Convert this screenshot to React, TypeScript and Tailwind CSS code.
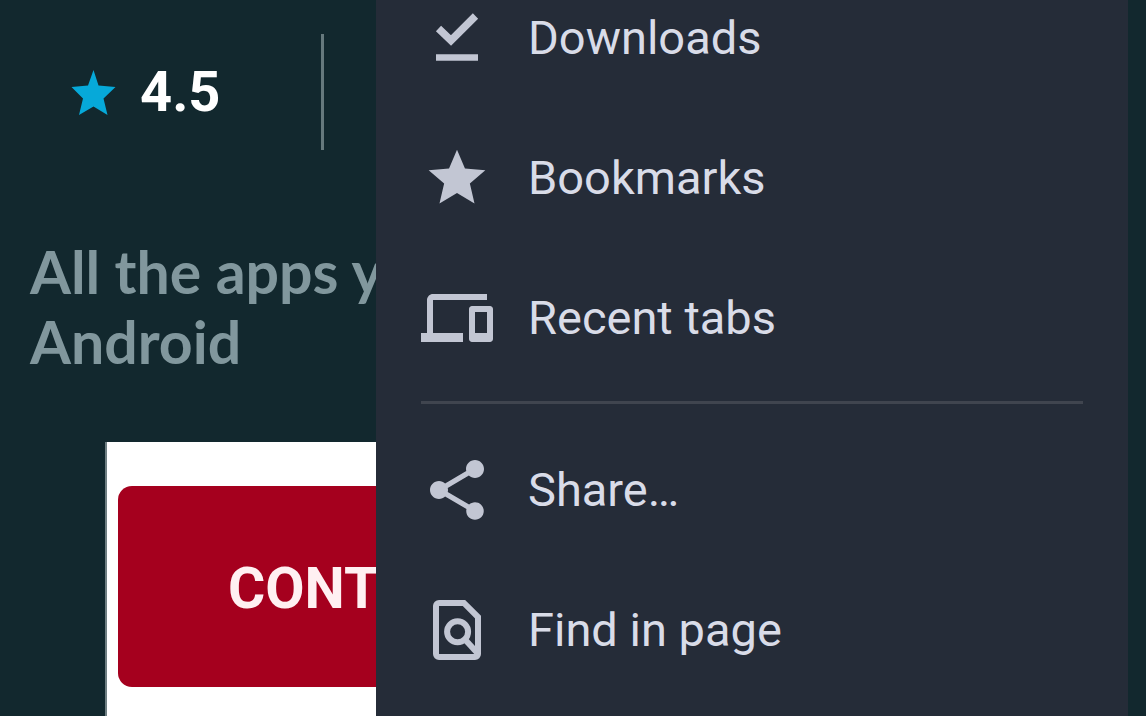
import type { ReactNode } from "react";
import { MdDevices, MdShare, MdStar } from "react-icons/md";

function RatingStar() {
  return (
    <svg viewBox="0 0 54 54" className="size-[54px]" fill="currentColor" aria-hidden="true">
      <path d="M27.500 5 32.500 20.500 49.500 22 37.500 33.500 41.500 50 27.500 41.500 13 50 17 33.500 5.500 22 22 20.500z" />
    </svg>
  );
}

function DownloadDoneIcon() {
  return (
    <svg viewBox="0 0 72 72" className="size-[72px]" fill="none" stroke="currentColor" aria-hidden="true">
      <path d="M17.500 26.500 30 38.500 54.500 14" strokeWidth="7.500" />
      <path d="M15 55.500h42" strokeWidth="6.500" />
    </svg>
  );
}

function FindInPageIcon() {
  return (
    <svg viewBox="0 0 24 24" className="size-[72px]" fill="none" stroke="currentColor" strokeWidth="2" aria-hidden="true">
      <path d="M6 3h8.300L19 7.700V20a1 1 0 0 1-1 1H6a1 1 0 0 1-1-1V4a1 1 0 0 1 1-1z" />
      <circle cx="12.200" cy="12.600" r="3.500" />
      <path d="m14.600 15.100 4.100 4.500" />
    </svg>
  );
}

function MenuItem({ icon, label }: { icon: ReactNode; label: string }) {
  return (
    <li>
      <button type="button" className="flex h-[140px] w-full items-center gap-[35px] px-[45px] text-left">
        <span className="flex size-[72px] shrink-0 items-center justify-center text-[#c2c6d3]">{icon}</span>
        <span className="whitespace-nowrap text-[47px] leading-[56px] text-[#d9dce8]">{label}</span>
      </button>
    </li>
  );
}

export default function App() {
  return (
    <div className="relative h-screen overflow-hidden bg-[#12282e] font-['Roboto',sans-serif]">
      <main className="flex h-full flex-col">
        <div className="flex pt-[34px]">
          <div className="flex h-[116px] w-[324px] items-center gap-5 border-r-[3px] border-[#66797d] pl-[66px]">
            <span className="text-[#06a9d9]">
              <RatingStar />
            </span>
            <span className="text-[56px] font-bold leading-[64px] text-white">4.5</span>
          </div>
        </div>
        <p className="mt-[87px] whitespace-nowrap pl-[30px] font-['Lato',sans-serif] text-[59px] font-bold leading-[70px] text-[#81979d]">
          All the apps y<br />
          Android
        </p>
        <section className="ml-[105px] mr-[18px] mt-[65px] flex-1 border-l-2 border-[#6f7f83] bg-white pl-[11px] pt-[44px]">
          <button
            type="button"
            className="h-[201px] w-full rounded-[14px] bg-[#a5001e] pl-[110px] pt-[4px] text-left text-[57px] font-bold leading-[64px] text-[#fff0f2]"
          >
            CONT
          </button>
        </section>
      </main>

      <nav className="absolute -top-8 bottom-0 right-[18px] w-[752px] bg-[#252c38]" aria-label="Browser menu">
        <ul>
          <MenuItem icon={<DownloadDoneIcon />} label="Downloads" />
          <MenuItem icon={<MdStar className="size-[68px]" />} label="Bookmarks" />
          <MenuItem icon={<MdDevices className="size-[72px]" />} label="Recent tabs" />
          <li role="separator" className="mx-[45px] mb-[16px] mt-[13px] h-[3px] bg-[#40454f]" />
          <MenuItem icon={<MdShare className="size-[72px]" />} label="Share…" />
          <MenuItem icon={<FindInPageIcon />} label="Find in page" />
        </ul>
      </nav>
    </div>
  );
}
